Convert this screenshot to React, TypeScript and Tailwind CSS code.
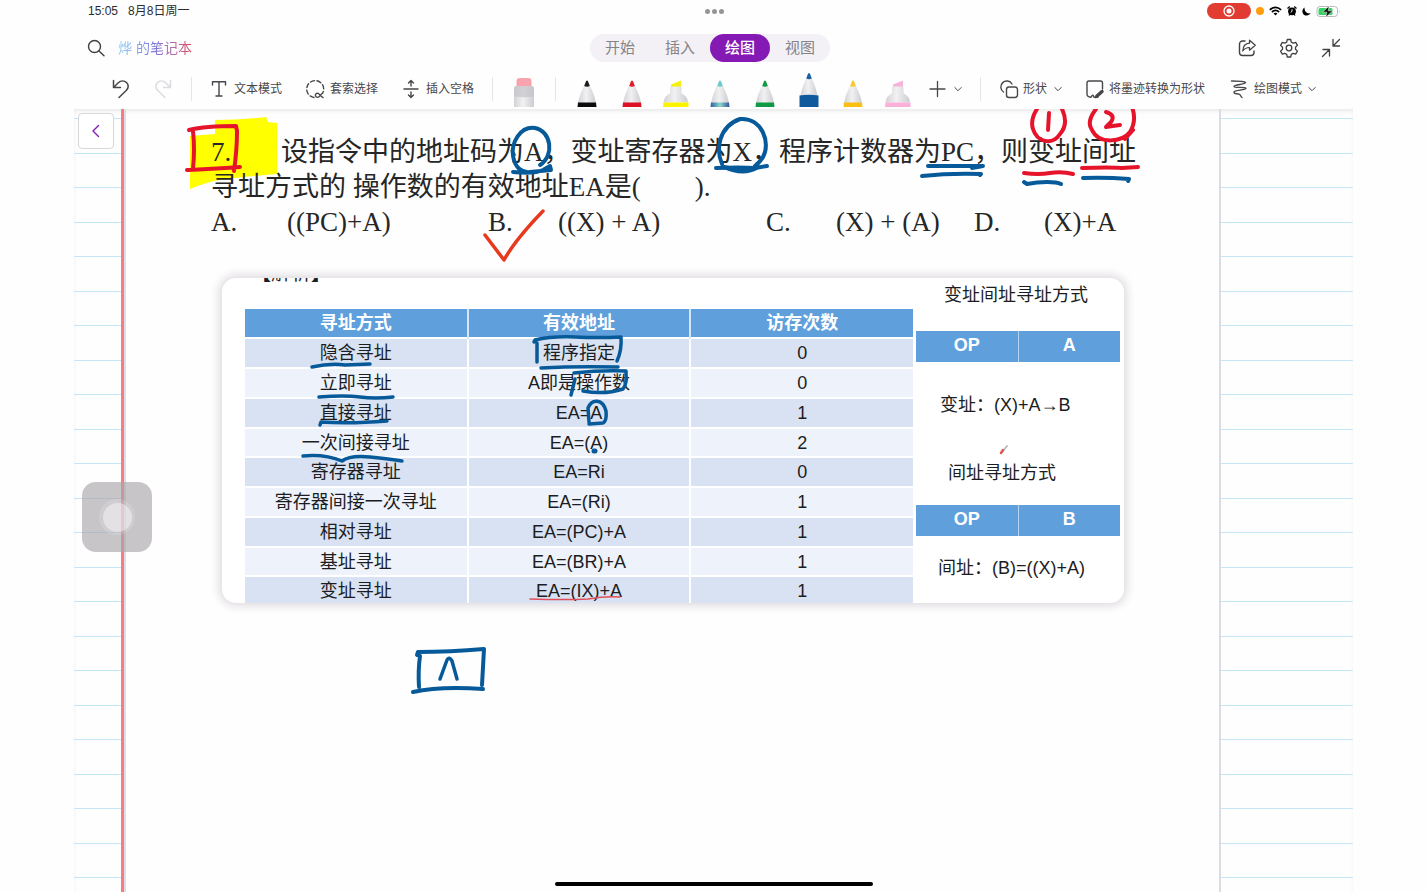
import type { ReactNode } from 'react'

const SANS = "font-['Liberation_Sans','Noto_Sans_CJK_SC',sans-serif]"

const tabs = ['开始', '插入', '绘图', '视图']

const pens = [
  { name: '黑色笔', tip: '#1c1c1e', band: '#0c0c0e', kind: 'pen' },
  { name: '红色笔', tip: '#e01b2c', band: '#dd1126', kind: 'pen' },
  { name: '黄色荧光笔', tip: '#f5f011', band: '#fbf300', kind: 'marker' },
  { name: '银河笔', tip: '#6fc9cb', band: 'url(#galaxy)', kind: 'pen' },
  { name: '绿色笔', tip: '#119a45', band: '#0f9a43', kind: 'pen' },
  { name: '蓝色笔', tip: '#1763a3', band: '#0e5a9c', kind: 'active' },
  { name: '金色笔', tip: '#fbc92b', band: '#fabf12', kind: 'pen' },
  { name: '粉色荧光笔', tip: '#f8b3dc', band: '#fbb0da', kind: 'marker' },
]

const modes = [
  ['隐含寻址', '程序指定', '0'],
  ['立即寻址', 'A即是操作数', '0'],
  ['直接寻址', 'EA=A', '1'],
  ['一次间接寻址', 'EA=(A)', '2'],
  ['寄存器寻址', 'EA=Ri', '0'],
  ['寄存器间接一次寻址', 'EA=(Ri)', '1'],
  ['相对寻址', 'EA=(PC)+A', '1'],
  ['基址寻址', 'EA=(BR)+A', '1'],
  ['变址寻址', 'EA=(IX)+A', '1'],
]

function Icon({ w = 20, h = 20, children }: { w?: number; h?: number; children: ReactNode }) {
  return (
    <svg
      width={w}
      height={h}
      viewBox={`0 0 ${w} ${h}`}
      fill="none"
      stroke="currentColor"
      strokeWidth="1.4"
      strokeLinecap="round"
      strokeLinejoin="round"
      className="shrink-0"
      aria-hidden="true"
    >
      {children}
    </svg>
  )
}

function Chevron() {
  return (
    <Icon w={8} h={8}>
      <path d="M.8 2.500 4 5.700 7.200 2.500" strokeWidth="1" />
    </Icon>
  )
}

function Divider() {
  return <div className="h-6 w-px shrink-0 bg-[#e6e4e8]" />
}

function Pen({ tip, band, kind }: { tip: string; band: string; kind: string }) {
  if (kind === 'marker') {
    return (
      <svg width="26" height="36" viewBox="0 0 26 36" aria-hidden="true">
        <path d="M8 15V12.500l10-4v6.500z" fill={tip} />
        <path d="M7 15.500q0-1 1-1h9.500q1 0 1 1V20c0 1.500 1 2 2.500 3 2.500 1.500 3.700 4 4 7.500H.500C1 27 2 24.500 4.500 23 6 22 7 21.500 7 20z" fill="url(#barrel)" />
        <path d="M.500 30.500h25V35H0z" fill={band} />
      </svg>
    )
  }
  if (kind === 'active') {
    return (
      <svg width="26" height="36" viewBox="0 0 26 36" aria-hidden="true">
        <path d="M10.500 6C7.500 12 5.500 18 4.500 24h17C20.500 18 18.500 12 15.500 6z" fill="url(#barrel)" />
        <path d="M10.200 6.500 12 1.700q1-1.400 2 0L15.800 6.500q-2.800 1.500-5.600 0z" fill={tip} />
        <path d="M3.500 23.500q9.500-1.500 19 0V35h-19z" fill={band} />
      </svg>
    )
  }
  return (
    <svg width="26" height="36" viewBox="0 0 26 36" aria-hidden="true">
      <path d="M10.500 13C7.500 19 5 25 4 31h18c-1-6-3.500-12-6.500-18z" fill="url(#barrel)" />
      <path d="M10.200 14 12 9.200q1-1.400 2 0L15.800 14q-2.800 1.400-5.600 0z" fill={tip} />
      <path d="M4 30.500h18l.500 4.500h-19z" fill={band} />
    </svg>
  )
}

function StatusBar() {
  return (
    <div className="grid h-[22px] grid-cols-[1fr_auto_1fr] items-center pr-3 pl-[14px]">
      <div className="flex gap-[10px] text-xs text-[#2b2b2d]">
        <span>15:05</span>
        <span>8月8日周一</span>
      </div>
      <button aria-label="多任务" className="flex gap-[2px]">
        <span className="size-[5px] rounded-full bg-[#959497]" />
        <span className="size-[5px] rounded-full bg-[#959497]" />
        <span className="size-[5px] rounded-full bg-[#959497]" />
      </button>
      <div className="flex items-center justify-end gap-[5px] text-black">
        <span className="flex h-4 w-11 items-center justify-center rounded-full bg-[#e23b32] text-white">
          <svg width="12" height="12" viewBox="0 0 12 12" aria-hidden="true">
            <circle cx="6" cy="6" r="5" fill="none" stroke="currentColor" strokeWidth="1.300" />
            <circle cx="6" cy="6" r="2.500" fill="currentColor" />
          </svg>
        </span>
        <span className="size-2 rounded-full bg-[#ff9d0a]" />
        <svg width="13" height="10" viewBox="0 0 13 10" fill="none" stroke="currentColor" strokeWidth="1.700" aria-hidden="true">
          <path d="M.800 3.800q5.700-5 11.400 0M2.900 6q3.600-3.200 7.200 0" />
          <path d="M4.600 7.500q1.900-1.500 3.800 0L6.500 9.400z" fill="currentColor" stroke="none" />
        </svg>
        <svg width="10" height="10" viewBox="0 0 10 10" aria-hidden="true">
          <path d="M.500 2.500 2.800.500M9.500 2.500 7.200.500M2 9.500l1-1.500M8 9.500 7 8" stroke="currentColor" strokeWidth="1.300" />
          <circle cx="5" cy="5.300" r="3.900" fill="currentColor" />
          <path d="M5 3.200v2.300L3.600 6.300" fill="none" stroke="#fff" strokeWidth=".9" />
        </svg>
        <svg width="9" height="9" viewBox="0 0 9 9" aria-hidden="true">
          <path d="M2.600.500C-.300 2-.300 6.300 2.200 7.900 4.500 9.300 7.500 8.600 8.700 6.100 5.500 7.200 2 5 2.600.500z" fill="currentColor" />
        </svg>
        <svg width="25" height="13" viewBox="0 0 25 13" aria-hidden="true">
          <rect x="1" y="1.500" width="20.500" height="10" rx="3" fill="#fff" stroke="#b9b9bb" />
          <rect x="2.500" y="3" width="14" height="7" rx="1.500" fill="#35d366" />
          <path d="M23 5v3q1.500-1.500 0-3z" fill="#b9b9bb" />
          <path d="M13 1 6.500 7.200h4.300L9.800 12.300 16.800 5.800h-4.500z" fill="#151515" stroke="#fff" strokeWidth=".5" />
        </svg>
      </div>
    </div>
  )
}

function NavBar() {
  return (
    <div className="mt-[6px] grid h-10 grid-cols-[1fr_auto_1fr] items-center pr-3 pl-[5px] text-[#404042]">
      <div className="ml-2 flex items-center gap-[13px]">
        <button aria-label="搜索">
          <Icon w={18} h={18}>
            <circle cx="7.500" cy="7.500" r="6" />
            <path d="M12 12l5 4.800" />
          </Icon>
        </button>
        <h1 className="bg-linear-to-r from-[#8fd0fa] via-[#7c77dd] to-[#e04560] bg-clip-text text-sm text-transparent">
          烨 的笔记本
        </h1>
      </div>
      <nav className="flex h-7 rounded-full bg-[#f3f1f5] text-[15px]">
        {tabs.map((tab) => (
          <button
            key={tab}
            className={
              tab === '绘图'
                ? 'w-15 rounded-full bg-[#8519b3] font-medium text-white'
                : 'w-15 text-[#858388]'
            }
          >
            {tab}
          </button>
        ))}
      </nav>
      <div className="flex items-center justify-end gap-[22px]">
        <button aria-label="共享">
          <Icon>
            <path d="M8 3H5.500A3 3 0 0 0 2.500 6v8.500a3 3 0 0 0 3 3H14a3 3 0 0 0 3-3V13" />
            <path d="M12.500 2.200 18.300 7.300 12.500 12.200V9.500C9.500 9.500 7.500 10.500 5.800 13 6 8.500 8.500 5.500 12.500 5.200z" strokeWidth="1.200" />
          </Icon>
        </button>
        <button aria-label="设置">
          <Icon>
            <path d="M8.300 1.500h3.400l.600 2.600 1.900 1.100 2.500-.800 1.700 3-1.900 1.800v2.100l1.900 1.800-1.700 3-2.500-.800-1.900 1.100-.600 2.600H8.300l-.600-2.600-1.900-1.100-2.500.800-1.700-3 1.900-1.800V9.200L1.600 7.400l1.700-3 2.500.800 1.900-1.100z" strokeWidth="1.300" />
            <circle cx="10" cy="10" r="2.800" strokeWidth="1.300" />
          </Icon>
        </button>
        <button aria-label="退出全屏">
          <Icon>
            <path d="M18.500 1.500 12 8M12 1.500V8h6.500M1.500 18.500 8.500 11.500M2 11.500h6.500V18" strokeWidth="1.300" />
          </Icon>
        </button>
      </div>
    </div>
  )
}

function Toolbar() {
  return (
    <div className="flex h-[41px] items-center pl-[26px] text-xs whitespace-nowrap text-[#47464a]">
      <svg width="0" height="0" className="absolute" aria-hidden="true">
        <defs>
          <linearGradient id="barrel">
            <stop offset="0" stopColor="#d3d2d6" />
            <stop offset=".45" stopColor="#f1f0f2" />
            <stop offset="1" stopColor="#cdccd0" />
          </linearGradient>
          <linearGradient id="galaxy">
            <stop offset="0" stopColor="#2a62a0" />
            <stop offset=".5" stopColor="#8fd6cd" />
            <stop offset="1" stopColor="#34549a" />
          </linearGradient>
        </defs>
      </svg>
      <button aria-label="撤消" className="flex w-[42px] justify-center">
        <Icon>
          <path d="M2.500 1.500v7H9.500M2.800 8.200 7 4c3-3 6.500-2.500 8.500-.500 2.200 2.300 2 5.500-.300 8L8 18.500" strokeWidth="1.500" />
        </Icon>
      </button>
      <button aria-label="恢复" disabled className="flex w-[42px] justify-center text-[#dddbdf]">
        <Icon>
          <path d="M17.500 1.500v7H10.500M17.200 8.200 13 4C10 1 6.500 1.500 4.500 3.500c-2.200 2.300-2 5.500.300 8L12 18.500" strokeWidth="1.500" />
        </Icon>
      </button>
      <div className="ml-[7px] flex items-center gap-[19px]">
        <Divider />
        <button className="flex items-center gap-[7px]">
          <Icon w={16}>
            <path d="M1.500 6V2.800h13V6M8 2.800V17M5 17h6" />
          </Icon>
          文本模式
        </button>
      </div>
      <button className="ml-[23px] flex items-center gap-[5px]">
        <Icon>
          <path d="M9 18.500a8.500 8.500 0 1 1 9.700-8.500c0 1.500-.300 2.500-.800 3.500" strokeDasharray="4.200 2.600" />
          <path d="M18 18.500c-3-1-3.500-4.300-5.500-4.300a2.100 2.100 0 1 0 0 4.200c2.500 0 2.700-3 5.200-4.200" strokeWidth="1.400" />
        </Icon>
        套索选择
      </button>
      <button className="ml-[25px] flex items-center gap-[7px]">
        <Icon w={16}>
          <path d="M1 10h14M8 7V2M5.500 4 8 1.500 10.500 4M8 13v5M5.500 16 8 18.500l2.500-2.500" />
        </Icon>
        插入空格
      </button>
      <div className="ml-[18px] flex h-full items-center gap-5">
        <Divider />
        <button aria-label="橡皮擦" className="self-end pb-[2px]">
          <svg width="22" height="31" viewBox="0 0 22 31" aria-hidden="true">
            <path d="M3.500 11V5q0-3 3-3h9q3 0 3 3v6z" fill="#f9a3ae" />
            <path d="M1 31V13q0-3 3-3h14q3 0 3 3v18z" fill="url(#barrel)" />
            <path d="M1 12.500Q1 10 4 10h14q3 0 3 2.500v8q-10 1.500-20 0z" fill="#c4c3c7" opacity=".7" />
          </svg>
        </button>
        <Divider />
      </div>
      <div className="ml-[9px] flex h-full w-[355px] items-end justify-around pb-px">
        {pens.map((pen) => (
          <button key={pen.name} aria-label={pen.name}>
            <Pen tip={pen.tip} band={pen.band} kind={pen.kind} />
          </button>
        ))}
      </div>
      <button aria-label="添加笔" className="ml-[9px] flex items-center gap-2">
        <Icon w={17}>
          <path d="M8.500 2.500v15M1 10h15" strokeWidth="1.300" />
        </Icon>
        <Chevron />
      </button>
      <div className="ml-[18px] flex items-center gap-[18px]">
        <Divider />
        <button className="flex items-center gap-1">
          <Icon>
            <path d="M4.500 13A6 6 0 1 1 13 5" />
            <rect x="7.500" y="8" width="11" height="10.500" rx="2.500" />
          </Icon>
          形状
          <span className="ml-[3px]">
            <Chevron />
          </span>
        </button>
      </div>
      <button className="ml-[23px] flex items-center gap-1">
        <Icon>
          <path d="M6 18.200c-3-.200-4-1.200-4-3V4a2 2 0 0 1 2-2h11.500a2 2 0 0 1 2 2v6M6 18.200c1-2 2-2.500 2.500-1.200.300 1.500 1 1.700 2.500.800" />
          <path d="M17 12.500 12 17" strokeWidth="3.500" />
          <path d="M10.500 18.500l1-2 1.500 1.500z" />
        </Icon>
        将墨迹转换为形状
      </button>
      <button className="ml-[25px] flex items-center gap-[6px]">
        <Icon w={18}>
          <path d="M1.500 2C7 2 14.500 2 15.500 3.500 15.500 5.500 4 5.500 4 7.500c0 1.800 11.500 0 12 1.800C16 11.500 4 10.800 4 13c0 2 2.500 1.500 5 2.200 2 .600 1.500 2.300 3 3.300" />
        </Icon>
        绘图模式
        <Chevron />
      </button>
    </div>
  )
}

// evenly spaced rules of the paper, visible beside the page
function Rules() {
  return (
    <div className="flex h-full flex-col justify-between pt-[9px] pb-[14px]">
      {Array.from({ length: 23 }, (_, i) => (
        <div key={i} className="h-px bg-[#c4e6f7]" />
      ))}
    </div>
  )
}

function Question() {
  return (
    <section className="pl-[85px] font-['Liberation_Serif','Noto_Sans_CJK_SC',serif] text-[27px] leading-[35px] whitespace-nowrap text-[#262626]">
      <p className="flex">
        <span className="w-[70px]">7.</span>
        <span>设指令中的地址码为A，变址寄存器为X，程序计数器为PC，则变址间址</span>
      </p>
      <p>寻址方式的 操作数的有效地址EA是({'\u00a0'.repeat(8)}).</p>
      <ol className="flex">
        <li className="flex w-[277px]">
          <span className="w-[76px]">A.</span>((PC)+A)
        </li>
        <li className="flex w-[278px]">
          <span className="w-[70px]">B.</span>((X) + A)
        </li>
        <li className="flex w-[208px]">
          <span className="w-[70px]">C.</span>(X) + (A)
        </li>
        <li className="flex">
          <span className="w-[70px]">D.</span>(X)+A
        </li>
      </ol>
    </section>
  )
}

function Instruction({ field }: { field: string }) {
  return (
    <table className="w-full table-fixed border-collapse text-lg leading-5 font-bold text-white">
      <tbody>
        <tr className="h-[31px] bg-[#5f9fdc]">
          <td className="border-r border-[#b5d5f2] pb-[3px] text-center">OP</td>
          <td className="pb-[3px] text-center">{field}</td>
        </tr>
      </tbody>
    </table>
  )
}

function AnswerCard() {
  return (
    <section className="ml-24 h-[325px] w-[902px] overflow-hidden rounded-[14px] bg-white text-lg leading-6 text-[#1b1d22] shadow-[0_0_9px_3px_rgba(60,40,60,0.16)]">
      <div className="flex h-[5px] items-end overflow-hidden pl-[29px] text-xl leading-5">
        <span className="font-bold">【</span>解析<span className="font-bold">】</span>
      </div>
      <div className="flex pl-[23px]">
        <table className="mt-[26px] w-[668px] table-fixed border-collapse self-start text-center">
          <thead>
            <tr className="h-[29px] border-b-2 border-white bg-[#5f9fdc] text-white">
              <th className="border-r-2 border-[#d5e6f6]">寻址方式</th>
              <th className="border-r-2 border-[#d5e6f6]">有效地址</th>
              <th>访存次数</th>
            </tr>
          </thead>
          <tbody>
            {modes.map(([name, address, count]) => (
              <tr key={name} className="h-[30px] border-b-2 border-white bg-[#edf2fb] nth-[4n]:h-[29px] odd:bg-[#d8e2f3]">
                <td className="border-r-2 border-white">{name}</td>
                <td className="border-r-2 border-white">{address}</td>
                <td>{count}</td>
              </tr>
            ))}
          </tbody>
        </table>
        <div className="ml-[3px] w-[204px] whitespace-nowrap">
          <p className="pl-7">变址间址寻址方式</p>
          <div className="mt-6">
            <Instruction field="A" />
          </div>
          <p className="mt-[31px] pl-6">变址：(X)+A→B</p>
          <p className="mt-11 pl-8">间址寻址方式</p>
          <div className="mt-5">
            <Instruction field="B" />
          </div>
          <p className="mt-5 pl-[22px]">间址：(B)=((X)+A)</p>
        </div>
      </div>
    </section>
  )
}

function Highlight() {
  return (
    <svg width="1279" height="783" viewBox="74 109 1279 783" className="absolute top-0 left-0" aria-hidden="true">
      <path d="M215 120Q240 120 266 117L268 122 277 123V174Q240 177 214 181 202 184 190 189V136L215 134z" fill="#ffff00" />
    </svg>
  )
}

function Ink() {
  return (
    <svg
      width="1279"
      height="783"
      viewBox="74 109 1279 783"
      fill="none"
      strokeLinecap="round"
      strokeLinejoin="round"
      className="pointer-events-none absolute top-0 left-0"
      aria-hidden="true"
    >
      <g stroke="#e5142b" strokeWidth="4">
        <path d="M189 130Q205 126 236 126L237 131Q237 150 234 171M193 131Q195 150 193 168M187 170Q210 169 240 167" />
        <path d="M1037 109Q1030 120 1033 129C1037 142 1052 146 1060 134Q1069 124 1062 109M1049 113 1048 130" />
        <path d="M1096 109Q1086 122 1092 130C1099 145 1122 142 1130 132Q1137 120 1132 107M1133 130 1125 139" />
        <path d="M1106 112Q1116 115 1111 122L1106 127Q1112 126 1120 125" />
        <path d="M1024 173Q1038 175 1050 173T1073 174M1082 168Q1110 167 1122 168L1138 167" />
      </g>
      <path d="M485 235 504 260Q515 240 543 211" stroke="#e8391f" strokeWidth="3.500" />
      <path d="M530 599Q565 600 588 599 605 596 620 597" stroke="#e0505a" strokeWidth="1.500" />
      <g stroke="#075a9a" strokeWidth="4">
        <path d="M540 165C555 155 551 131 535 128 520 126 511 143 513 156 515 168 522 173 530 172M513 172Q535 174 543 170L550 166 551 170 530 172" />
        <path d="M722 164C716 150 718 127 740 119 762 117 771 143 763 157Q760 162 755 166M716 168Q740 167 755 168L767 166" />
        <path d="M724 167Q744 176 758 167L748 169 734 169z" fill="#075a9a" />
        <path d="M928 166Q955 166 983 166L972 168M922 176Q950 173 981 174L980 175" />
        <path d="M1024 182 1027 184Q1037 182 1047 182T1061 184M1083 178Q1105 177 1129 179L1128 181" />
      </g>
      <g stroke="#075a9a" strokeWidth="3.500">
        <path d="M534 342 535 340Q552 336 575 337T621 337Q622 350 617 361M537 343 537 362M541 368Q575 366 618 367" />
        <path d="M571 395 575 379M574 373Q600 370 626 371 627 385 623 389 605 395 583 391" />
        <path d="M589 422 588 408C592 398 603 399 606 411Q607 421 603 423L589 424" />
        <path d="M594 451h1" strokeWidth="5" />
        <path d="M312 367Q330 363 345 365L370 364M319 397Q345 395 360 397T393 397M320 425 321 422Q350 424 387 421" />
        <path d="M303 456Q325 454 342 461 350 455 370 457T402 461" />
      </g>
      <g stroke="#075a9a" strokeWidth="4">
        <path d="M417 655 418 652Q450 652 484 649L482 685M420 656Q418 670 419 687M413 692Q440 686 483 689" />
        <path d="M440 679 447 660Q449 656 452 661L457 679" strokeWidth="3.500" />
      </g>
      {/* laser pointer brush */}
      <path d="M1003 451 1007 446" stroke="#bdbabd" strokeWidth="2" />
      <path d="M1001 453 1003 450" stroke="#dc5a52" strokeWidth="2.500" />
    </svg>
  )
}

export default function App() {
  return (
    <div className={`flex min-h-screen flex-col bg-[#fefefe] px-[74px] ${SANS}`}>
      <header>
        <StatusBar />
        <NavBar />
        <Toolbar />
      </header>

      <main className="relative flex flex-1 overflow-hidden shadow-[inset_0_3px_4px_-1px_rgba(50,40,60,0.10)]">
        <aside className="w-[47px] shrink-0">
          <Rules />
        </aside>
        <div className="w-[5px] shrink-0 border-r-2 border-l-3 border-r-[#dedde3] border-l-[#f97c80]" />

        <article className="min-w-0 flex-1 pt-[26px]">
          <Highlight />
          <div className="relative flex flex-col gap-[38px]">
            <Question />
            <AnswerCard />
          </div>
        </article>

        <aside className="w-[134px] shrink-0 border-l-2 border-[#dcdbe2]">
          <Rules />
        </aside>

        <Ink />

        <button
          aria-label="返回"
          className="absolute top-1 left-1 flex size-9 items-center justify-center rounded-[4px] border border-[#d9d7dc] bg-white text-[#8519b3]"
        >
          <Icon w={10} h={16}>
            <path d="M7.500 2.500 2 8l5.500 5.500" />
          </Icon>
        </button>

        <button
          aria-label="辅助触控"
          className="absolute top-[373px] left-2 flex size-[70px] items-center justify-center rounded-[14px] bg-[#aaa6ab]/65"
        >
          <span className="flex size-9 items-center justify-center rounded-full bg-white/15">
            <span className="size-[29px] rounded-full bg-white/40" />
          </span>
        </button>

        <div className="absolute bottom-[6px] left-1/2 h-1 w-[318px] -translate-x-1/2 rounded-full bg-black" />
      </main>
    </div>
  )
}
